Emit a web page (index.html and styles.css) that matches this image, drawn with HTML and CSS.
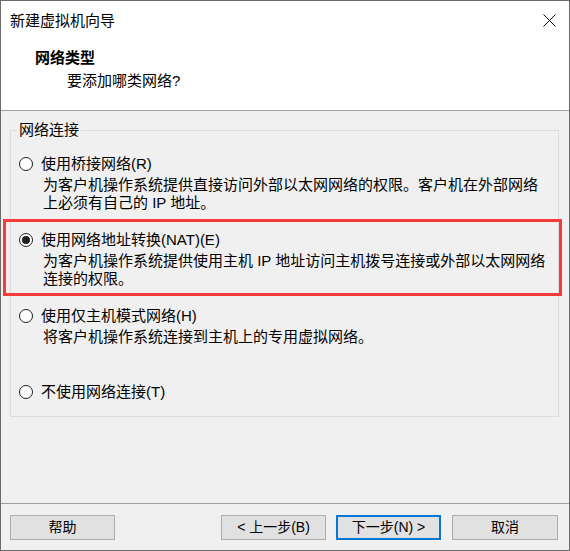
FILE: index.html
```html
<!DOCTYPE html>
<html lang="zh-CN">
<head>
<meta charset="utf-8">
<title>新建虚拟机向导</title>
<link rel="stylesheet" href="styles.css">
</head>
<body>
<div class="window">
  <div class="header">
    <div class="titlebar">
      <span class="title">新建虚拟机向导</span>
      <svg class="close" width="13" height="13" viewBox="0 0 13 13" aria-hidden="true">
        <path d="M0.5 0.5 L12.5 12.5 M12.5 0.5 L0.5 12.5" stroke="#000" stroke-width="1" fill="none"/>
      </svg>
    </div>
    <div class="h-title">网络类型</div>
    <div class="h-sub">要添加哪类网络?</div>
  </div>
  <div class="body">
    <fieldset class="group">
      <legend>网络连接</legend>
      <div class="options">
        <div class="option">
          <div class="opt-label"><span class="radio"></span><span>使用桥接网络(R)</span></div>
          <div class="opt-desc">
            <div class="line">为客户机操作系统提供直接访问外部以太网网络的权限。客户机在外部网络</div>
            <div class="line">上必须有自己的 IP 地址。</div>
          </div>
        </div>
        <div class="option hl">
          <div class="opt-label"><span class="radio on"></span><span>使用网络地址转换(NAT)(E)</span></div>
          <div class="opt-desc">
            <div class="line">为客户机操作系统提供使用主机 IP 地址访问主机拨号连接或外部以太网网络</div>
            <div class="line">连接的权限。</div>
          </div>
        </div>
        <div class="option">
          <div class="opt-label"><span class="radio"></span><span>使用仅主机模式网络(H)</span></div>
          <div class="opt-desc">
            <div class="line">将客户机操作系统连接到主机上的专用虚拟网络。</div>
          </div>
        </div>
        <div class="option">
          <div class="opt-label"><span class="radio"></span><span>不使用网络连接(T)</span></div>
        </div>
      </div>
    </fieldset>
    <div class="footer">
      <button class="btn">帮助</button>
      <button class="btn back">&lt; 上一步(B)</button>
      <button class="btn next default">下一步(N) &gt;</button>
      <button class="btn cancel">取消</button>
    </div>
  </div>
</div>
</body>
</html>
```
FILE: styles.css
```css
* { box-sizing: border-box; }
html, body { margin: 0; padding: 0; background: #ffffff; }
body {
  font-family: "Liberation Sans", "Noto Sans CJK SC", sans-serif;
  font-size: 15px;
  line-height: 18px;
  color: #000;
}
.window {
  width: 570px;
  height: 551px;
  border: 1px solid #6b6b6b;
  display: flex;
  flex-direction: column;
  overflow: hidden;
}
.header {
  background: #ffffff;
  height: 110px;
  border-bottom: 1px solid #a0a0a0;
  flex: none;
}
.titlebar {
  display: flex;
  justify-content: space-between;
  align-items: flex-start;
  padding: 11px 13px 0 9px;
  height: 29px;
}
.close { margin-top: 2px; display: block; }
.h-title {
  font-weight: bold;
  padding-left: 34px;
  margin-top: 19px;
}
.h-sub {
  padding-left: 66px;
  margin-top: 5px;
}
.body {
  flex: 1;
  background: #f0f0f0;
  display: flex;
  flex-direction: column;
}
.group {
  margin: 10px 10px 0 9px;
  padding: 16px 0 15px 0;
  border: 1px solid #dcdcdc;
  min-width: 0;
}
.group legend {
  padding: 0 2px;
  margin-left: 6px;
  line-height: 18px;
}
.options {
  display: flex;
  flex-direction: column;
  gap: 19px;
}
.option {
  padding-left: 8px;
}
.option.hl { position: relative; }
.option.hl::after {
  content: "";
  position: absolute;
  left: -8px;
  top: -12px;
  width: 553px;
  height: 71px;
  border: 3px solid #f53a3a;
  pointer-events: none;
}
.opt-label {
  display: flex;
  align-items: center;
  gap: 8px;
  height: 18px;
  white-space: nowrap;
}
.radio {
  width: 14px;
  height: 14px;
  border: 1px solid #1f1f1f;
  border-radius: 50%;
  background: #fff;
  flex: none;
  display: grid;
  place-items: center;
}
.radio.on::after {
  content: "";
  width: 8px;
  height: 8px;
  border-radius: 50%;
  background: #1f1f1f;
}
.opt-desc {
  margin-top: 3px;
  padding-left: 24px;
  height: 36px;
  white-space: nowrap;
}
.line { height: 18px; }
.footer {
  margin-top: auto;
  border-top: 1px solid #a0a0a0;
  padding: 11px 11px 10px 9px;
  display: flex;
}
.btn {
  width: 105px;
  height: 25px;
  background: #e1e1e1;
  border: 1px solid #adadad;
  font-family: "Liberation Sans", "Noto Sans CJK SC", sans-serif;
  font-size: 14px;
  line-height: 21px;
  color: #000;
  padding: 0;
  margin: 0;
}
.btn.default { border: 2px solid #0078d7; line-height: 19px; }
.btn.back { margin-left: auto; }
.btn.next { margin-left: 10px; }
.btn.cancel { margin-left: 11px; width: 106px; }
```
